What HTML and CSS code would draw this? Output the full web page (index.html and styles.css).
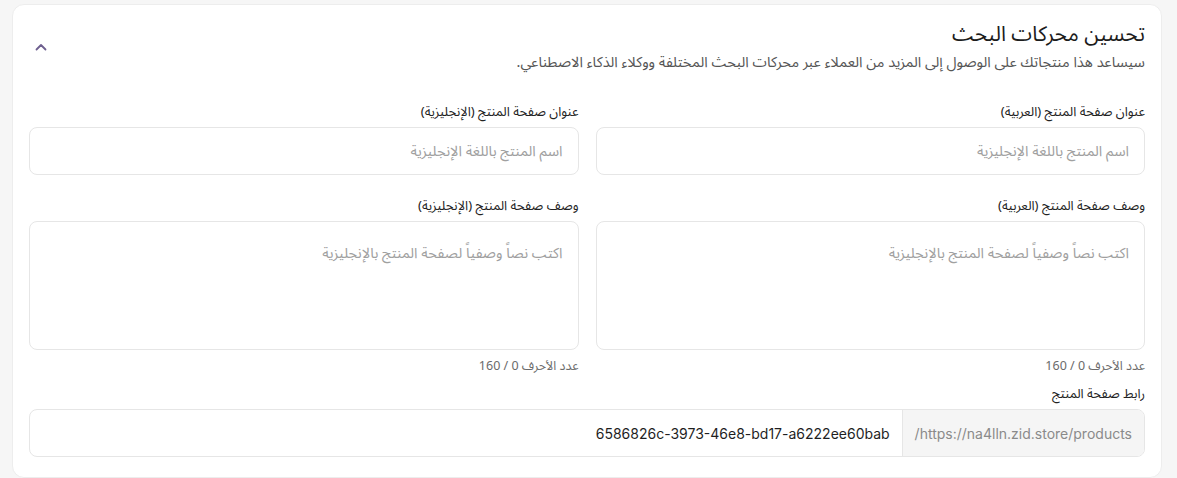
FILE: index.html
```html
<!DOCTYPE html>
<html lang="ar" dir="rtl">
<head>
  <meta charset="UTF-8">
  <meta name="viewport" content="width=device-width, initial-scale=1.0">
  <title>تحسين محركات البحث</title>
  <link rel="stylesheet" href="styles.css">
</head>
<body>
  <div class="card">
    <!-- رأس القسم -->
    <div class="card-head">
      <div class="head-text">
        <h2>تحسين محركات البحث</h2>
        <p class="sub">سيساعد هذا منتجاتك على الوصول إلى المزيد من العملاء عبر محركات البحث المختلفة ووكلاء الذكاء الاصطناعي.</p>
      </div>
      <button class="collapse-btn" aria-label="طي">
        <svg width="12" height="8" viewBox="0 0 12 8"><path d="M1.5 6.5 L6 2 L10.5 6.5" fill="none" stroke="#6e5f8f" stroke-width="1.8" stroke-linecap="round" stroke-linejoin="round"/></svg>
      </button>
    </div>

    <!-- الحقول -->
    <div class="grid">
      <div class="field">
        <label>عنوان صفحة المنتج (العربية)</label>
        <input type="text" placeholder="اسم المنتج باللغة الإنجليزية">
      </div>
      <div class="field">
        <label>عنوان صفحة المنتج (الإنجليزية)</label>
        <input type="text" placeholder="اسم المنتج باللغة الإنجليزية">
      </div>
      <div class="field">
        <label>وصف صفحة المنتج (العربية)</label>
        <textarea placeholder="اكتب نصاً وصفياً لصفحة المنتج بالإنجليزية"></textarea>
        <div class="counter">عدد الأحرف 0 / 160</div>
      </div>
      <div class="field">
        <label>وصف صفحة المنتج (الإنجليزية)</label>
        <textarea placeholder="اكتب نصاً وصفياً لصفحة المنتج بالإنجليزية"></textarea>
        <div class="counter">عدد الأحرف 0 / 160</div>
      </div>
    </div>

    <div class="field url-field">
      <label>رابط صفحة المنتج</label>
      <div class="url-box">
        <span class="url-prefix">https://na4lln.zid.store/products/</span>
        <span class="url-value">6586826c-3973-46e8-bd17-a6222ee60bab</span>
      </div>
    </div>
  </div>
</body>
</html>
```

FILE: styles.css
```css
/* الأساس */
body {
  margin: 0;
  padding: 4px 15px 0 12px;
  background-color: #f6f6f6;
  color: #1f1f1f;
  font-family: "Noto Sans Arabic", "DejaVu Sans", Inter, sans-serif;
}
.card {
  background: #fff;
  border: 1px solid #ededed;
  border-radius: 12px;
  padding: 15px 16px 20px;
}
/* رأس القسم */
.card-head {
  display: flex;
  align-items: center;
  justify-content: space-between;
}
h2 {
  margin: 0;
  font-size: 21px;
  line-height: 28px;
  font-weight: 400;
  color: #1c1c1c;
}
.sub {
  margin: 4px 0 0;
  font-size: 14.5px;
  line-height: 22px;
  color: #555;
}
.collapse-btn {
  width: 24px;
  height: 24px;
  padding: 0;
  border: none;
  background: none;
  display: flex;
  align-items: center;
  justify-content: center;
  cursor: pointer;
}
/* الحقول */
.grid {
  display: grid;
  grid-template-columns: 1fr 1fr;
  column-gap: 17px;
  row-gap: 21px;
  margin-top: 28px;
}
.field {
  display: flex;
  flex-direction: column;
}
label {
  font-size: 13px;
  line-height: 20px;
  color: #222;
  margin-bottom: 5px;
}
input[type="text"],
textarea {
  box-sizing: border-box;
  width: 100%;
  border: 1px solid #e6e6e6;
  border-radius: 8px;
  background: #fff;
  font-family: inherit;
  font-size: 14.5px;
  color: #222;
  padding: 0 15px;
  outline: none;
}
input[type="text"] {
  height: 48px;
}
textarea {
  height: 129px;
  padding-top: 16px;
  resize: none;
}
::placeholder {
  color: #a0a0a0;
}
.counter {
  margin-top: 7px;
  font-size: 12.5px;
  line-height: 19px;
  color: #6b6b6b;
}
/* الرابط */
.url-field {
  margin-top: 8px;
}
.url-box {
  box-sizing: border-box;
  display: flex;
  height: 48px;
  border: 1px solid #e6e6e6;
  border-radius: 8px;
  overflow: hidden;
}
.url-prefix {
  display: flex;
  align-items: center;
  padding: 0 12px;
  background-color: #f5f5f5;
  border-left: 1px solid #e6e6e6;
  font-family: Inter, "Liberation Sans", sans-serif;
  font-size: 14px;
  color: #8a8a8a;
}
.url-value {
  display: flex;
  align-items: center;
  padding: 0 12px;
  font-family: Inter, "Liberation Sans", sans-serif;
  font-size: 14px;
  color: #1f1f1f;
}
```
